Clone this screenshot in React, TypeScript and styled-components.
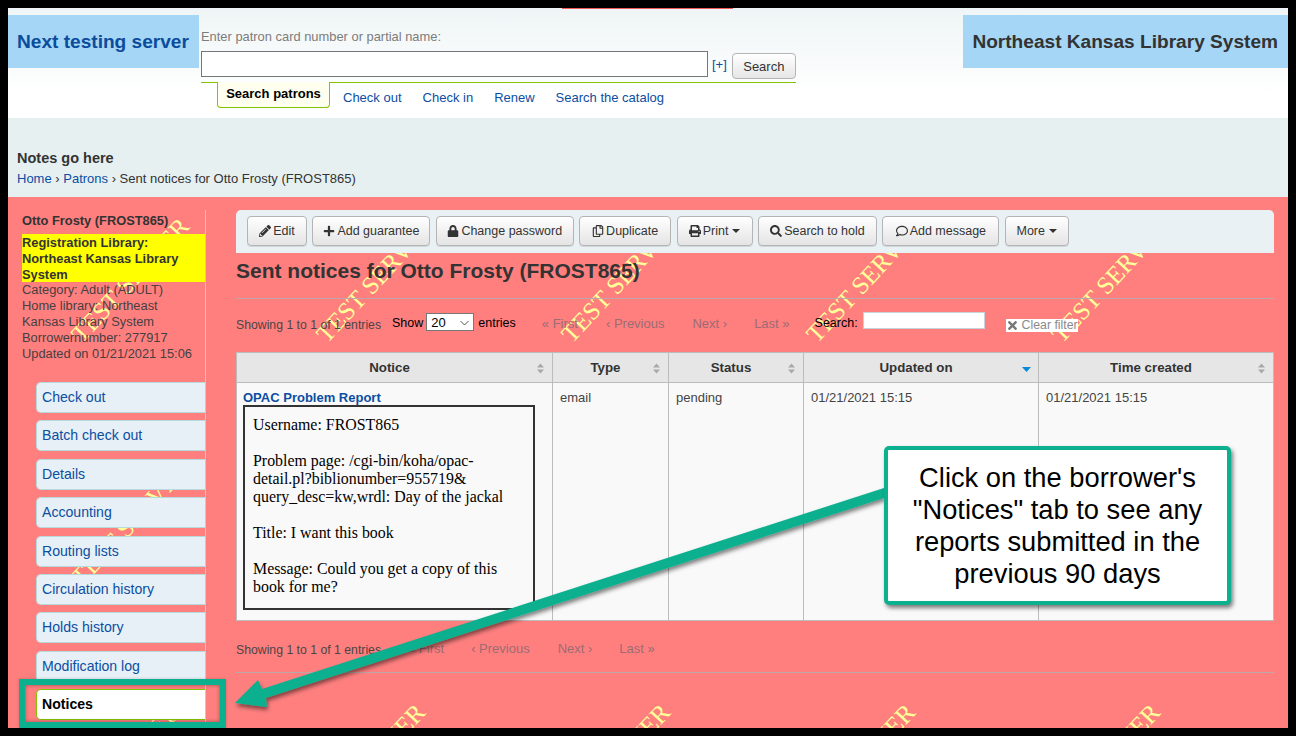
import styled, { createGlobalStyle } from 'styled-components'
import { FaPencilAlt, FaPlus, FaLock, FaRegCopy, FaPrint, FaSearch, FaRegComment, FaTimes } from 'react-icons/fa'

const GlobalStyle = createGlobalStyle`
  html, body { margin: 0; padding: 0; background: #000; }
  body { font-family: "Liberation Sans", Arial, sans-serif; }
  a { text-decoration: none; color: #0b4ea2; }
`

const Frame = styled.div`
  position: relative;
  width: 1296px;
  height: 736px;
  box-sizing: border-box;
  border: 8px solid #000;
  overflow: hidden;
  background: #fff;
  display: flex;
  flex-direction: column;
`

const RedStrip = styled.div`
  position: absolute;
  left: 554px;
  top: 0;
  width: 171px;
  height: 1px;
  background: #f25a5a;
`

const Header = styled.header`
  height: 110px;
  flex: none;
  display: flex;
  align-items: flex-start;
  padding-top: 7px;
  box-sizing: border-box;
  background: linear-gradient(#eff5f6, #ffffff 80%);
`

const BrandBox = styled.div<{ $width: number; $right?: boolean }>`
  width: ${p => p.$width}px;
  height: 53px;
  flex: none;
  box-sizing: border-box;
  background: #a5d6f5;
  display: flex;
  align-items: center;
  font-weight: 700;
  font-size: 19.1px;
  white-space: nowrap;
  padding: ${p => (p.$right ? '0 10px 0 0' : '0 0 0 9px')};
  justify-content: ${p => (p.$right ? 'flex-end' : 'flex-start')};
  color: ${p => (p.$right ? '#333' : '#0b4c9c')};
  margin-left: ${p => (p.$right ? 'auto' : '0')};
`

const SearchColumn = styled.div`
  width: 595px;
  margin-left: 2px;
  display: flex;
  flex-direction: column;
`

const SearchLabel = styled.div`
  font-size: 12.9px;
  line-height: 15px;
  color: #7c7c7c;
  margin-top: 14px;
`

const SearchRow = styled.div`
  display: flex;
  align-items: flex-start;
  margin-top: 7px;
  height: 30px;
  border-bottom: 1px solid #84c400;
  padding-bottom: 1px;
`

const PatronInput = styled.input`
  width: 507px;
  height: 26px;
  box-sizing: border-box;
  border: 1px solid #767676;
  background: #fff;
  padding: 0;
`

const MoreLink = styled.a`
  font-size: 13px;
  margin: 6px 5px 0 4px;
  line-height: 16px;
`

const SearchButton = styled.button`
  width: 64px;
  height: 26px;
  margin-top: 2px;
  box-sizing: border-box;
  border: 1px solid #b4b4b4;
  border-radius: 4px;
  background: linear-gradient(#ffffff, #e6e6e6);
  font: 13px "Liberation Sans", Arial, sans-serif;
  color: #333;
  padding: 0;
`

const TabRow = styled.nav`
  display: flex;
  align-items: flex-start;
  margin: -1px 0 0 16px;
`

const ActiveTab = styled.div`
  width: 113px;
  height: 26px;
  box-sizing: border-box;
  border: 1px solid #84c400;
  border-top: none;
  border-radius: 0 0 4px 4px;
  background: #ffffef;
  font-weight: 700;
  font-size: 13px;
  line-height: 24px;
  text-align: center;
  color: #000;
`

const HeaderLink = styled.a<{ $gap: number }>`
  font-size: 13px;
  line-height: 16px;
  margin-left: ${p => p.$gap}px;
  margin-top: 8px;
`

const NotesBand = styled.section`
  height: 79px;
  flex: none;
  box-sizing: border-box;
  background: #e6f0f1;
  padding: 32px 0 0 9px;
`

const Notes = styled.div`
  font-weight: 700;
  font-size: 14.5px;
  line-height: 17px;
  color: #333;
`

const Crumbs = styled.div`
  font-size: 13px;
  line-height: 16px;
  margin-top: 4px;
  color: #333;
`

const Main = styled.main`
  position: relative;
  flex: 1;
  min-height: 0;
  display: flex;
  background: #ff7f7f;
`

const Watermark = styled.svg`
  position: absolute;
  left: 0;
  top: 0;
  width: 1280px;
  height: 531px;
`

const WatermarkText = styled.text`
  font-family: "Liberation Serif", serif;
  font-size: 25px;
  fill: #ffff99;
`

const Sidebar = styled.aside`
  position: relative;
  width: 198px;
  flex: none;
  margin-top: 13px;
  box-sizing: border-box;
  border-right: 1px solid #d8c4c8;
  padding-left: 14px;
  font-size: 12.85px;
  line-height: 16px;
  color: #474040;
`

const PatronName = styled.div`
  font-weight: 700;
  color: #333;
  margin-top: 3px;
  margin-bottom: 5px;
`

const Registration = styled.div`
  height: 48px;
  box-sizing: border-box;
  padding-top: 1px;
  background: #ffff00;
  font-weight: 700;
  color: #333;
`

const InfoLine = styled.div``

const TabList = styled.ul`
  list-style: none;
  margin: 20px 0 0 14px;
  padding: 0;
  display: flex;
  flex-direction: column;
  gap: 7.375px;
`

const SideTab = styled.li<{ $active?: boolean }>`
  height: 31px;
  box-sizing: border-box;
  border: 1px solid ${p => (p.$active ? '#84c400' : '#b8d9dc')};
  border-right: none;
  border-radius: 5px 0 0 5px;
  background: ${p => (p.$active ? '#fff' : '#e7f0f6')};
  padding-left: 5px;
  font-size: 14.1px;
  line-height: 29px;
  font-weight: ${p => (p.$active ? 700 : 400)};
  color: ${p => (p.$active ? '#000' : '#0b4ea2')};
`

const Content = styled.div`
  position: relative;
  width: 1038px;
  margin: 13px 0 0 30px;
`

const Toolbar = styled.div`
  height: 43px;
  box-sizing: border-box;
  background: #e9f1f4;
  border-radius: 5px 5px 0 0;
  padding: 6px 0 0 11px;
  display: flex;
  gap: 5.4px;
`

const ToolButton = styled.button<{ $width: number }>`
  width: ${p => p.$width}px;
  height: 30px;
  box-sizing: border-box;
  border: 1px solid #b4b4b4;
  border-radius: 4px;
  background: linear-gradient(#ffffff, #e4e4e4);
  box-shadow: 0 1px 0 rgba(0, 0, 0, 0.1);
  font: 12.5px "Liberation Sans", Arial, sans-serif;
  color: #333;
  padding: 0;
  display: flex;
  align-items: center;
  justify-content: center;
  gap: 2px;
  & > svg { font-size: 12px; }
`

const Caret = styled.span`
  width: 0;
  height: 0;
  margin-left: 2px;
  border-left: 4px solid transparent;
  border-right: 4px solid transparent;
  border-top: 4px solid #333;
`

const Title = styled.h1`
  margin: 0;
  height: 46px;
  box-sizing: border-box;
  padding-top: 6px;
  font-size: 21px;
  line-height: 24px;
  font-weight: 700;
  color: #333;
  border-bottom: 1px solid #bfa6a8;
`

const PagerRow = styled.div<{ $top: number; $height: number }>`
  display: flex;
  align-items: center;
  margin-top: ${p => p.$top}px;
  height: ${p => p.$height}px;
  font-size: 12.25px;
  color: #4c4444;
`

const PagerInfo = styled.span`
  width: 150px;
  position: relative;
  top: 2px;
  white-space: nowrap;
`

const PagerLabel = styled.span<{ $gap: number }>`
  margin-left: ${p => p.$gap}px;
  font-size: 12.5px;
  color: #000;
`

const SelectWrap = styled.span`
  position: relative;
  top: -1px;
  width: 48px;
  height: 18px;
  margin-left: 3px;
  display: block;
`

const EntriesSelect = styled.select`
  display: block;
  width: 48px;
  height: 18px;
  box-sizing: border-box;
  border: 1px solid #767676;
  border-radius: 0;
  appearance: none;
  background: #fff;
  font: 13px "Liberation Sans", Arial, sans-serif;
  color: #000;
  padding: 0 0 0 4px;
`

const SelectChevron = styled.svg`
  position: absolute;
  right: 5px;
  top: 7px;
  width: 9px;
  height: 6px;
`

const PageLink = styled.span<{ $gap: number }>`
  margin-left: ${p => p.$gap}px;
  font-size: 13px;
  color: #9c6c72;
  white-space: nowrap;
`

const FilterInput = styled.input`
  width: 122px;
  height: 17px;
  margin-left: 5px;
  box-sizing: border-box;
  border: 1px solid #c8d4dc;
  background: #fff;
  padding: 0;
  position: relative;
  top: -3px;
`

const ClearFilter = styled.span`
  margin-left: 21px;
  position: relative;
  top: 2px;
  width: 72px;
  height: 13px;
  background: #fff;
  color: #8a8a8a;
  font-size: 12.3px;
  line-height: 13px;
  display: flex;
  align-items: center;
  gap: 3px;
  white-space: nowrap;
  & > svg { color: #777; font-size: 13px; }
`

const Table = styled.table`
  width: 1037px;
  margin-top: 16px;
  border-collapse: collapse;
  table-layout: fixed;
  font-size: 13px;
  color: #444;
`

const HeadCell = styled.th<{ $width: number }>`
  position: relative;
  width: ${p => p.$width}px;
  height: 30px;
  box-sizing: border-box;
  padding: 0 10px 0 0;
  background: #e6e6e6;
  border: 1px solid #bcbcbc;
  font-size: 13.3px;
  font-weight: 700;
  color: #333;
  text-align: center;
`

const SortIcon = styled.svg`
  position: absolute;
  right: 7px;
  top: 10px;
  width: 9px;
  height: 11px;
`

const BodyCell = styled.td<{ $first?: boolean }>`
  height: 238px;
  box-sizing: border-box;
  padding: 7px 7px 0 ${p => (p.$first ? 6 : 7)}px;
  vertical-align: top;
  background: #f9f9f9;
  border: 1px solid #bcbcbc;
  line-height: 15px;
`

const NoticeTitle = styled.a`
  display: block;
  font-weight: 700;
  font-size: 13px;
  line-height: 15px;
`

const NoticeBody = styled.div`
  width: 292px;
  height: 205px;
  box-sizing: border-box;
  border: 2px solid #333;
  padding: 9px 8px 0;
  font-family: "Liberation Serif", serif;
  font-size: 15.9px;
  line-height: 18px;
  color: #000;
  white-space: nowrap;
`

const Rule = styled.div`
  margin-top: 11px;
  height: 1px;
  background: #bfa6a8;
`

const Callout = styled.div`
  position: absolute;
  left: 876px;
  top: 438px;
  width: 347px;
  height: 159px;
  box-sizing: border-box;
  border: 4px solid #0bb08e;
  border-radius: 5px;
  background: #fff;
  box-shadow: 2px 3px 4px rgba(0, 0, 0, 0.5);
  padding-top: 12px;
  font-size: 27.3px;
  line-height: 32px;
  text-align: center;
  color: #000;
`

const Highlight = styled.div`
  position: absolute;
  left: 11px;
  top: 671px;
  width: 207px;
  height: 49px;
  box-sizing: border-box;
  border: 6px solid #0bb08e;
  box-shadow: inset 0 0 4px rgba(0, 0, 0, 0.4), 0 0 3px rgba(0, 0, 0, 0.2);
`

const ArrowLayer = styled.svg`
  position: absolute;
  left: 0;
  top: 0;
  width: 1280px;
  height: 720px;
  pointer-events: none;
`

const rows = [{ y: 147, x: 74 }, { y: 390, x: 74 }, { y: 633, x: 65 }]
const columns = [0, 245, 490, 735, 980]

const sideTabs = ['Check out', 'Batch check out', 'Details', 'Accounting', 'Routing lists', 'Circulation history', 'Holds history', 'Modification log']

function SortArrows({ active }: { active?: boolean }) {
  if (active) {
    return (
      <SortIcon viewBox="0 0 9 11">
        <path d="M0 4h9L4.5 9z" fill="#0b8ad8" />
      </SortIcon>
    )
  }
  return (
    <SortIcon viewBox="0 0 9 11">
      <path d="M4.5 0.5L8 4.5H1zM4.5 10.5L1 6.5h7z" fill="#a8a8a8" />
    </SortIcon>
  )
}

export default function App() {
  return (
    <Frame>
      <GlobalStyle />
      <RedStrip />
      <Header>
        <BrandBox $width={191}>Next testing server</BrandBox>
        <SearchColumn>
          <SearchLabel>Enter patron card number or partial name:</SearchLabel>
          <SearchRow>
            <PatronInput />
            <MoreLink>[+]</MoreLink>
            <SearchButton>Search</SearchButton>
          </SearchRow>
          <TabRow>
            <ActiveTab>Search patrons</ActiveTab>
            <HeaderLink $gap={13}>Check out</HeaderLink>
            <HeaderLink $gap={21}>Check in</HeaderLink>
            <HeaderLink $gap={21}>Renew</HeaderLink>
            <HeaderLink $gap={21}>Search the catalog</HeaderLink>
          </TabRow>
        </SearchColumn>
        <BrandBox $width={325} $right>Northeast Kansas Library System</BrandBox>
      </Header>
      <NotesBand>
        <Notes>Notes go here</Notes>
        <Crumbs><a>Home</a> › <a>Patrons</a> › Sent notices for Otto Frosty (FROST865)</Crumbs>
      </NotesBand>
      <Main>
        <Watermark viewBox="0 0 1280 531">
          {rows.flatMap(r => columns.map(c => (
            <WatermarkText key={`${c}-${r.y}`} x={r.x + c} y={r.y} transform={`rotate(-47 ${r.x + c} ${r.y})`}>TEST SERVER</WatermarkText>
          )))}
        </Watermark>
        <Sidebar>
          <PatronName>Otto Frosty (FROST865)</PatronName>
          <Registration>Registration Library: Northeast Kansas Library System</Registration>
          <InfoLine>Category: Adult (ADULT)</InfoLine>
          <InfoLine>Home library: Northeast<br />Kansas Library System</InfoLine>
          <InfoLine>Borrowernumber: 277917</InfoLine>
          <InfoLine>Updated on 01/21/2021 15:06</InfoLine>
          <TabList>
            {sideTabs.map(t => <SideTab key={t}>{t}</SideTab>)}
            <SideTab $active>Notices</SideTab>
          </TabList>
        </Sidebar>
        <Content>
          <Toolbar>
            <ToolButton $width={60}><FaPencilAlt />Edit</ToolButton>
            <ToolButton $width={118}><FaPlus />Add guarantee</ToolButton>
            <ToolButton $width={138}><FaLock />Change password</ToolButton>
            <ToolButton $width={92}><FaRegCopy />Duplicate</ToolButton>
            <ToolButton $width={76}><FaPrint />Print<Caret /></ToolButton>
            <ToolButton $width={119}><FaSearch />Search to hold</ToolButton>
            <ToolButton $width={117}><FaRegComment />Add message</ToolButton>
            <ToolButton $width={64}>More<Caret /></ToolButton>
          </Toolbar>
          <Title>Sent notices for Otto Frosty (FROST865)</Title>
          <PagerRow $top={11} $height={26}>
            <PagerInfo>Showing 1 to 1 of 1 entries</PagerInfo>
            <PagerLabel $gap={6}>Show</PagerLabel>
            <SelectWrap>
              <EntriesSelect defaultValue="20"><option>20</option></EntriesSelect>
              <SelectChevron viewBox="0 0 9 6">
                <path d="M0.5 1L4.5 5L8.5 1" fill="none" stroke="#555" strokeWidth="1" />
              </SelectChevron>
            </SelectWrap>
            <PagerLabel $gap={4}>entries</PagerLabel>
            <PageLink $gap={26}>« First</PageLink>
            <PageLink $gap={28}>‹ Previous</PageLink>
            <PageLink $gap={28}>Next ›</PageLink>
            <PageLink $gap={27}>Last »</PageLink>
            <PagerLabel $gap={25}>Search:</PagerLabel>
            <FilterInput />
            <ClearFilter><FaTimes />Clear filter</ClearFilter>
          </PagerRow>
          <Table>
            <thead>
              <tr>
                <HeadCell $width={316}>Notice<SortArrows /></HeadCell>
                <HeadCell $width={116}>Type<SortArrows /></HeadCell>
                <HeadCell $width={135}>Status<SortArrows /></HeadCell>
                <HeadCell $width={235}>Updated on<SortArrows active /></HeadCell>
                <HeadCell $width={235}>Time created<SortArrows /></HeadCell>
              </tr>
            </thead>
            <tbody>
              <tr>
                <BodyCell $first>
                  <NoticeTitle>OPAC Problem Report</NoticeTitle>
                  <NoticeBody>
                    Username: FROST865<br /><br />
                    Problem page: /cgi-bin/koha/opac-<br />detail.pl?biblionumber=955719&amp;<br />query_desc=kw,wrdl: Day of the jackal<br /><br />
                    Title: I want this book<br /><br />
                    Message: Could you get a copy of this<br />book for me?
                  </NoticeBody>
                </BodyCell>
                <BodyCell>email</BodyCell>
                <BodyCell>pending</BodyCell>
                <BodyCell>01/21/2021 15:15</BodyCell>
                <BodyCell>01/21/2021 15:15</BodyCell>
              </tr>
            </tbody>
          </Table>
          <PagerRow $top={14} $height={26}>
            <PagerInfo>Showing 1 to 1 of 1 entries</PagerInfo>
            <PageLink $gap={22}>« First</PageLink>
            <PageLink $gap={27}>‹ Previous</PageLink>
            <PageLink $gap={28}>Next ›</PageLink>
            <PageLink $gap={27}>Last »</PageLink>
          </PagerRow>
          <Rule />
        </Content>
      </Main>
      <Highlight />
      <ArrowLayer viewBox="0 0 1280 720">
        <defs>
          <filter id="arrowShadow" x="-5%" y="-5%" width="110%" height="115%">
            <feDropShadow dx="1" dy="3" stdDeviation="2" floodColor="#000" floodOpacity="0.5" />
          </filter>
        </defs>
        <path
          d="M876 480 L876 490 L258 690 L259 699 L227 695 L250 672 L254 681 Z"
          fill="#0bb08e"
          filter="url(#arrowShadow)"
        />
      </ArrowLayer>
      <Callout>
        Click on the borrower's<br />"Notices" tab to see any<br />reports submitted in the<br />previous 90 days
      </Callout>
    </Frame>
  )
}
